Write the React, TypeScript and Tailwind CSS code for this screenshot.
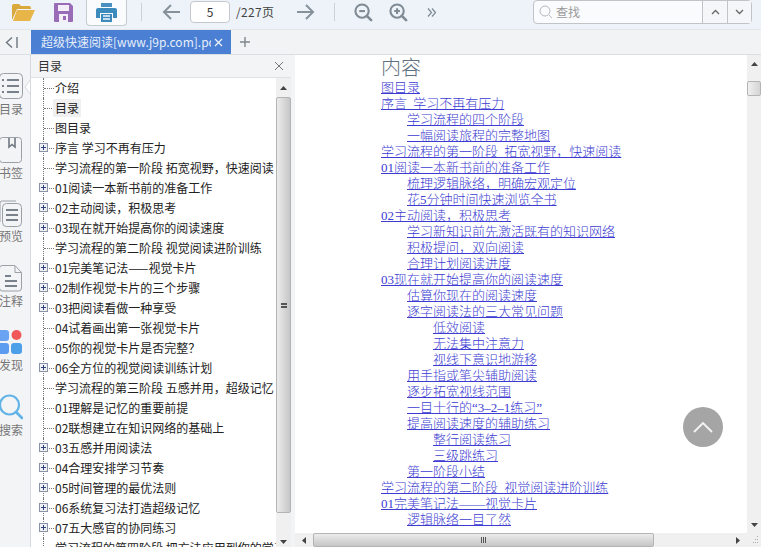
import { ReactNode } from "react";

const TREE: { t: string; plus?: boolean; sel?: boolean }[] = [
  { t: "介绍" },
  { t: "目录", sel: true },
  { t: "图目录" },
  { t: "序言 学习不再有压力", plus: true },
  { t: "学习流程的第一阶段 拓宽视野，快速阅读" },
  { t: "01阅读一本新书前的准备工作", plus: true },
  { t: "02主动阅读，积极思考", plus: true },
  { t: "03现在就开始提高你的阅读速度", plus: true },
  { t: "学习流程的第二阶段 视觉阅读进阶训练" },
  { t: "01完美笔记法——视觉卡片", plus: true },
  { t: "02制作视觉卡片的三个步骤", plus: true },
  { t: "03把阅读看做一种享受", plus: true },
  { t: "04试着画出第一张视觉卡片" },
  { t: "05你的视觉卡片是否完整？" },
  { t: "06全方位的视觉阅读训练计划", plus: true },
  { t: "学习流程的第三阶段 五感并用，超级记忆" },
  { t: "01理解是记忆的重要前提" },
  { t: "02联想建立在知识网络的基础上" },
  { t: "03五感并用阅读法", plus: true },
  { t: "04合理安排学习节奏", plus: true },
  { t: "05时间管理的最优法则", plus: true },
  { t: "06系统复习法打造超级记忆", plus: true },
  { t: "07五大感官的协同练习", plus: true },
  { t: "学习流程的第四阶段 把方法应用到你的学习中" },
];

const CONTENTS: [string, number][] = [
  ["图目录", 0],
  ["序言 学习不再有压力", 0],
  ["学习流程的四个阶段", 1],
  ["一幅阅读旅程的完整地图", 1],
  ["学习流程的第一阶段 拓宽视野，快速阅读", 0],
  ["01阅读一本新书前的准备工作", 0],
  ["梳理逻辑脉络，明确宏观定位", 1],
  ["花5分钟时间快速浏览全书", 1],
  ["02主动阅读，积极思考", 0],
  ["学习新知识前先激活既有的知识网络", 1],
  ["积极提问，双向阅读", 1],
  ["合理计划阅读进度", 1],
  ["03现在就开始提高你的阅读速度", 0],
  ["估算你现在的阅读速度", 1],
  ["逐字阅读法的三大常见问题", 1],
  ["低效阅读", 2],
  ["无法集中注意力", 2],
  ["视线下意识地游移", 2],
  ["用手指或笔尖辅助阅读", 1],
  ["逐步拓宽视线范围", 1],
  ["一目十行的“3–2–1练习”", 1],
  ["提高阅读速度的辅助练习", 1],
  ["整行阅读练习", 2],
  ["三级跳练习", 2],
  ["第一阶段小结", 1],
  ["学习流程的第二阶段 视觉阅读进阶训练", 0],
  ["01完美笔记法——视觉卡片", 0],
  ["逻辑脉络一目了然", 1],
];

const INDENT = ["pl-0", "pl-[26px]", "pl-[52px]"];

function RailItem({ label, icon, className }: { label: string; icon: ReactNode; className: string }) {
  return (
    <div className={`-ml-px flex w-[24px] flex-col items-center ${className}`}>
      <div className="h-[28px]">{icon}</div>
      <span className="whitespace-nowrap text-[12px] leading-[16px] text-[#777]">{label}</span>
    </div>
  );
}

function ZoomIcon({ plus }: { plus?: boolean }) {
  return (
    <svg width="19" height="19" viewBox="0 0 20 20" fill="none" stroke="#7f8a94" strokeWidth="2.2">
      <circle cx="8.5" cy="8.5" r="7" />
      <path d="M13.5 13.5l4.5 4.5" strokeWidth="2.8" strokeLinecap="round" />
      <path d={plus ? "M5.5 8.5h6M8.5 5.5v6" : "M5.5 8.5h6"} />
    </svg>
  );
}

function ArrowIcon({ right }: { right?: boolean }) {
  return (
    <svg width="18" height="16" viewBox="0 0 18 16" fill="none" stroke="#87919a" strokeWidth="2" className={right ? "rotate-180" : ""}>
      <path d="M9 1L2 8l7 7M2 8h16" />
    </svg>
  );
}

function Tri({ dir }: { dir: "up" | "down" | "left" | "right" }) {
  const pts = { up: "0,4 7,4 3.5,0", down: "0,0 7,0 3.5,4", left: "4,0 4,7 0,3.5", right: "0,0 0,7 4,3.5" }[dir];
  const v = dir === "up" || dir === "down";
  return (
    <svg width={v ? 7 : 4} height={v ? 4 : 7} viewBox={v ? "0 0 7 4" : "0 0 4 7"}>
      <polygon points={pts} fill="#444" />
    </svg>
  );
}

function TreeRow({ t, plus, sel }: { t: string; plus?: boolean; sel?: boolean }) {
  return (
    <div className="relative flex h-[20px] items-center pl-[12px]">
      <div className="h-full w-px shrink-0 border-l border-dotted border-[#777]" />
      <div className="w-[10px] shrink-0 border-t border-dotted border-[#777]" />
      {plus && (
        <div className="absolute left-[8px] top-[5px] flex h-[9px] w-[9px] items-center justify-center border border-[#8a93a6] bg-[#eef0f5]">
          <svg width="7" height="7" viewBox="0 0 7 7" stroke="#30407a">
            <path d="M1 3.5h5M3.5 1v5" />
          </svg>
        </div>
      )}
      <span className={`-ml-px shrink-0 whitespace-nowrap px-[2px] text-[12px] leading-[18px] text-[#222] ${sel ? "bg-[#f0f0f0]" : ""}`}>{t}</span>
    </div>
  );
}

export default function App() {
  return (
    <div className="flex h-[547px] w-[761px] flex-col overflow-hidden bg-[#f3f4f6] font-['Noto_Sans_CJK_SC','Noto_Sans',sans-serif]">
      {/* toolbar */}
      <div className="flex h-[30px] shrink-0 items-start border-b border-[#e3e7ea] bg-[#edf3f8]">
        <div className="ml-[12px] mt-[3px]">
          <svg width="23" height="19" viewBox="0 0 23 19">
            <path d="M0 3q0-2 2-2h5l2 2h8q2 0 2 2v1H5L0 17z" fill="#d9a93c" />
            <path d="M5 7h18l-5 11H1z" fill="#e8b548" />
          </svg>
        </div>
        <div className="ml-[19px] mt-[3px]">
          <svg width="19" height="19" viewBox="0 0 19 19">
            <path d="M1 0h15l3 3v15a1 1 0 0 1-1 1H1a1 1 0 0 1-1-1V1a1 1 0 0 1 1-1z" fill="#9a6cb8" />
            <rect x="4" y="2" width="11" height="6" fill="#f3eef7" />
            <rect x="5" y="11" width="9" height="8" fill="#f3eef7" />
            <rect x="9" y="13" width="3" height="4" fill="#9a6cb8" />
          </svg>
        </div>
        <div className="ml-[13px] flex h-[26px] w-[41px] items-center justify-center rounded-b-[4px] border border-t-0 border-[#c6cbd0] bg-[#f9fbfc]">
          <svg width="21" height="19" viewBox="0 0 21 19">
            <rect x="5" y="0" width="11" height="4" fill="#4a90c0" />
            <path d="M2 5h17a2 2 0 0 1 2 2v8h-4v-5H4v5H0V7a2 2 0 0 1 2-2z" fill="#3d8bbd" />
            <path d="M5 11h11v8H5z" fill="#3d8bbd" />
            <path d="M7 13h7M7 16h7" stroke="#f4f8fb" strokeWidth="1.5" />
          </svg>
        </div>
        <div className="ml-[14px] mt-[3px] h-[18px] w-px bg-[#ccd2d7]" />
        <div className="ml-[20px] mt-[4px]">
          <ArrowIcon />
        </div>
        <div className="ml-[10px] mt-[1px] flex h-[22px] w-[40px] items-center justify-center rounded-[4px] border border-[#c4c8cc] bg-white text-[12px] text-[#333]">
          5
        </div>
        <span className="ml-[6px] mt-[2px] w-[38px] whitespace-nowrap text-[12px] leading-[20px] tracking-[0.3px] text-[#444]">/227页</span>
        <div className="ml-[23px] mt-[4px]">
          <ArrowIcon right />
        </div>
        <div className="ml-[19px] mt-[3px] h-[18px] w-px bg-[#ccd2d7]" />
        <div className="ml-[19px] mt-[3px]">
          <ZoomIcon />
        </div>
        <div className="ml-[16px] mt-[3px]">
          <ZoomIcon plus />
        </div>
        <div className="ml-[19px] mt-[8px]">
          <svg width="10" height="9" viewBox="0 0 10 9" fill="none" stroke="#7f8a94" strokeWidth="1.2">
            <path d="M1 .5l3.5 4-3.5 4M5 .5l3.5 4-3.5 4" />
          </svg>
        </div>
        <div className="ml-[96px] flex h-[24px] w-[219px] rounded-[4px] border border-[#c0c4c8] bg-[#fafbfc]">
          <div className="flex flex-1 items-center pl-[5px]">
            <svg width="14" height="14" viewBox="0 0 14 14" fill="none" stroke="#b5b9bd">
              <circle cx="6" cy="6" r="5" />
              <path d="M10 10l3 3" />
            </svg>
            <span className="ml-[3px] text-[12px] text-[#9a9a9a]">查找</span>
          </div>
          <div className="flex w-[25px] items-center justify-center border-l border-[#c0c4c8] bg-[#f4f6f8]">
            <svg width="9" height="6" viewBox="0 0 9 6" fill="none" stroke="#666" strokeWidth="1.3">
              <path d="M1 5l3.5-3.5L8 5" />
            </svg>
          </div>
          <div className="flex w-[24px] items-center justify-center border-l border-[#c0c4c8] bg-[#f4f6f8]">
            <svg width="9" height="6" viewBox="0 0 9 6" fill="none" stroke="#666" strokeWidth="1.3">
              <path d="M1 1l3.5 3.5L8 1" />
            </svg>
          </div>
        </div>
      </div>

      {/* tab bar */}
      <div className="flex h-[25px] shrink-0 items-start border-b border-[#dcdfe2] bg-[#f1f3f5]">
        <div className="flex h-full w-[31px] items-center pl-[5px]">
          <svg width="13" height="11" viewBox="0 0 13 11" fill="none" stroke="#6d7780" strokeWidth="1.4">
            <path d="M7 .5L1.5 5.5 7 10.5M12 0v11" />
          </svg>
        </div>
        <div className="flex h-full w-[200px] items-center bg-[#4a7fd4] pl-[10px]">
          <span className="w-[170px] overflow-hidden whitespace-nowrap text-[12px] text-[#e6eefa]">超级快速阅读[www.j9p.com].pdf</span>
          <svg className="ml-[3px]" width="9" height="9" viewBox="0 0 9 9" stroke="#f0f5fd" strokeWidth="1.2">
            <path d="M1 1l7 7M8 1l-7 7" />
          </svg>
        </div>
        <svg className="ml-[9px] mt-[7px]" width="10" height="10" viewBox="0 0 10 10" stroke="#7d868e" strokeWidth="1.4">
          <path d="M0 5h10M5 0v10" />
        </svg>
      </div>

      {/* body */}
      <div className="flex min-h-0 flex-1">
        {/* left rail */}
        <div className="relative flex w-[31px] shrink-0 flex-col items-start overflow-hidden border-r border-[#d5d9dd] bg-[#f3f4f6]">
          <RailItem
            className="mt-[18px]"
            label="目录"
            icon={
              <svg width="24" height="26" viewBox="0 0 24 26" fill="none" stroke="#9aa0a6">
                <rect x="0.5" y="0.5" width="23" height="25" rx="4" />
                <path d="M3 7h2M8 7h12M3 13h2M8 13h12M3 19h2M8 19h12" stroke="#79818a" strokeWidth="2" />
              </svg>
            }
          />
          <RailItem
            className="mt-[20px]"
            label="书签"
            icon={
              <svg width="24" height="26" viewBox="0 0 24 26" fill="none" stroke="#9aa0a6">
                <rect x="0.5" y="0.5" width="22" height="25" rx="3" />
                <path d="M10 1v9l3-2.5 3 2.5V1" stroke="#6f7780" strokeWidth="1.6" />
              </svg>
            }
          />
          <RailItem
            className="mt-[19px]"
            label="预览"
            icon={
              <svg width="24" height="28" viewBox="0 0 24 28" fill="none" stroke="#9aa0a6">
                <path d="M1 22V3a2 2 0 0 1 2-2h14" />
                <rect x="3.5" y="3.5" width="19" height="23" rx="4" />
                <path d="M7 10h12M7 15h12M7 20h12" stroke="#79818a" strokeWidth="2" />
              </svg>
            }
          />
          <RailItem
            className="mt-[21px]"
            label="注释"
            icon={
              <svg width="24" height="27" viewBox="0 0 24 27" fill="none" stroke="#9aa0a6">
                <path d="M3 .5h13l6.5 7V23a3 3 0 0 1-3 3H3a3 3 0 0 1-2.500-3V3A3 3 0 0 1 3 .5zM16 1v6.500h6" />
                <path d="M6 11h6M6 16h12M6 21h12" stroke="#79818a" strokeWidth="1.8" />
              </svg>
            }
          />
          <RailItem
            className="mt-[20px]"
            label="发现"
            icon={
              <svg width="24" height="27" viewBox="0 0 24 27">
                <rect x="-1" y="1" width="11" height="11" rx="3" fill="#6aa3f2" />
                <rect x="-1" y="14" width="11" height="11" rx="3" fill="#5b9bf0" />
                <rect x="12" y="14" width="11" height="11" rx="3" fill="#4da0e8" />
                <circle cx="17.500" cy="6" r="5" fill="#f0585a" />
              </svg>
            }
          />
          <RailItem
            className="mt-[21px]"
            label="搜索"
            icon={
              <svg width="24" height="27" viewBox="0 0 24 27" fill="none" stroke="#62b4e6" strokeWidth="2.2">
                <circle cx="10.500" cy="11" r="9.500" />
                <path d="M17 18l6 6" strokeWidth="2.800" strokeLinecap="round" />
              </svg>
            }
          />
          {/* notch pointing at the active item */}
          <svg className="absolute left-[24px] top-[24px]" width="7" height="16" viewBox="0 0 7 16" fill="#fff" stroke="#d5d9dd">
            <path d="M7 0L1 8l6 8" />
          </svg>
        </div>

        {/* toc panel */}
        <div className="flex w-[260px] shrink-0 flex-col">
          <div className="flex h-[23px] shrink-0 items-center justify-between border-b border-[#dfe2e5] bg-[#f3f4f6] pl-[7px] pr-[8px]">
            <span className="text-[12px] text-[#333]">目录</span>
            <svg width="8" height="8" viewBox="0 0 8 8" stroke="#777">
              <path d="M0 0l8 8M8 0L0 8" />
            </svg>
          </div>
          <div className="flex min-h-0 flex-1 bg-white">
            <div className="min-w-0 flex-1 overflow-hidden">
              {TREE.map((row) => (
                <TreeRow key={row.t} {...row} />
              ))}
            </div>
            <div className="flex w-[15px] shrink-0 flex-col items-center bg-[#f0f0f0]">
              <div className="flex h-[19px] items-center justify-center"><Tri dir="up" /></div>
              <div className="flex h-[416px] w-full items-center justify-center rounded-[2px] border border-[#b4b4b4] bg-gradient-to-r from-[#ececec] to-[#c6c6c6]">
                <div className="h-[5px] w-[6px] border-y border-[#555] bg-[linear-gradient(#555_1px,transparent_1px)] bg-[length:100%_2px]" />
              </div>
              <div className="flex flex-1 items-end justify-center pb-[3px]"><Tri dir="down" /></div>
            </div>
          </div>
        </div>

        {/* splitter */}
        <div className="w-[4px] shrink-0 bg-[#f3f4f6]" />

        {/* page view */}
        <div className="relative flex min-w-0 flex-1 flex-col bg-white">
          <div className="flex min-h-0 flex-1">
            <div className="min-w-0 flex-1 overflow-hidden pl-[86px] pt-px font-['Liberation_Serif','Noto_Sans_CJK_SC',serif]">
              <div className="text-[20px] font-light leading-[24px] text-[#5f7080]">内容</div>
              {CONTENTS.map(([text, level]) => (
                <div key={text} className={`whitespace-nowrap text-[13px] font-light leading-[16px] [word-spacing:3px] ${INDENT[level]}`}>
                  <a className="text-[#3c3cd2] underline">{text}</a>
                </div>
              ))}
            </div>
            <div className="flex w-[14px] shrink-0 flex-col items-center bg-[#f0f0f0]">
              <div className="flex h-[26px] items-start justify-center pt-[7px]"><Tri dir="up" /></div>
              <div className="h-[15px] w-full rounded-[2px] border border-[#b4b4b4] bg-gradient-to-r from-[#f0f0f0] to-[#d4d4d4]" />
              <div className="flex flex-1 items-end justify-center pb-[6px]"><Tri dir="down" /></div>
            </div>
          </div>
          <div className="flex h-[14px] shrink-0 items-center bg-[#f0f0f0]">
            <div className="flex w-[18px] justify-center"><Tri dir="left" /></div>
            <div className="flex h-full w-[341px] items-center justify-center rounded-[2px] border border-[#b4b4b4] bg-gradient-to-b from-[#ececec] to-[#c6c6c6]">
              <div className="h-[6px] w-[6px] bg-[repeating-linear-gradient(90deg,#555_0,#555_1px,transparent_1px,transparent_2px)]" />
            </div>
            <div className="flex flex-1 justify-end pr-[7px]"><Tri dir="right" /></div>
            <svg width="14" height="14" viewBox="0 0 14 14" fill="#aaa">
              <rect x="10" y="3" width="1" height="1" />
              <rect x="8" y="6" width="1" height="1" />
              <rect x="10" y="6" width="1" height="1" />
              <rect x="6" y="9" width="1" height="1" />
              <rect x="8" y="9" width="1" height="1" />
              <rect x="10" y="9" width="1" height="1" />
            </svg>
          </div>
          <div className="absolute left-[388px] top-[352px] flex h-[40px] w-[40px] items-center justify-center rounded-full bg-[#a5a5a5]">
            <svg width="20" height="11" viewBox="0 0 20 11" fill="none" stroke="#f4f4f4" strokeWidth="1.800">
              <path d="M1 10l9-9 9 9" />
            </svg>
          </div>
        </div>
      </div>
    </div>
  );
}
